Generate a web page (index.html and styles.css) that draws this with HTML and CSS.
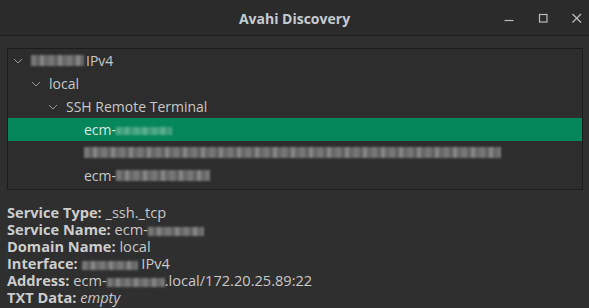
FILE: index.html
```html
<!DOCTYPE html>
<html>
<head>
<meta charset="utf-8">
<link rel="stylesheet" href="styles.css">
</head>
<body>
<div class="window">
  <header class="titlebar">
    <div class="title">Avahi Discovery</div>
    <div class="controls">
      <svg class="ctl" width="12" height="12" viewBox="0 0 12 12"><path d="M1.5 8.5h9" stroke="#bdbdbd" stroke-width="1.2"/></svg>
      <svg class="ctl" width="12" height="12" viewBox="0 0 12 12"><rect x="2.5" y="2.5" width="7.5" height="7.5" fill="none" stroke="#bdbdbd" stroke-width="1.2"/></svg>
      <svg class="ctl" width="12" height="12" viewBox="0 0 12 12"><path d="M1.5 2l8.5 8.5M10 2l-8.5 8.5" stroke="#bdbdbd" stroke-width="1.2"/></svg>
    </div>
  </header>
  <main class="content">
    <div class="tree">
      <div class="row lvl0"><span class="chev"><svg width="10" height="6" viewBox="0 0 10 6"><path d="M1 1l4 4 4-4" fill="none" stroke="#9a9a9a" stroke-width="1"/></svg></span><span class="blur b-if"></span>IPv4</div>
      <div class="row lvl1"><span class="chev"><svg width="10" height="6" viewBox="0 0 10 6"><path d="M1 1l4 4 4-4" fill="none" stroke="#9a9a9a" stroke-width="1"/></svg></span>local</div>
      <div class="row lvl2"><span class="chev"><svg width="10" height="6" viewBox="0 0 10 6"><path d="M1 1l4 4 4-4" fill="none" stroke="#9a9a9a" stroke-width="1"/></svg></span>SSH Remote Terminal</div>
      <div class="row lvl3 selected">ecm-<span class="blur b-sel"></span></div>
      <div class="row lvl3"><span class="blur b-long"></span></div>
      <div class="row lvl3">ecm-<span class="blur b-ecm2"></span></div>
    </div>
    <div class="details">
      <div><b>Service Type:</b> _ssh._tcp</div>
      <div><b>Service Name:</b> ecm-<span class="blur b-name"></span></div>
      <div><b>Domain Name:</b> local</div>
      <div><b>Interface:</b> <span class="blur b-iface"></span> IPv4</div>
      <div><b>Address:</b> ecm-<span class="blur b-addr"></span>.local/172.20.25.89:22</div>
      <div><b>TXT Data:</b> <i>empty</i></div>
    </div>
  </main>
</div>
</body>
</html>
```

FILE: styles.css
```css
html, body {
  margin: 0;
  padding: 0;
  background: #2f2f2f;
}
.window {
  width: 589px;
  height: 308px;
  overflow: hidden;
  font-family: "Open Sans", "Noto Sans", "DejaVu Sans", sans-serif;
  color: #cfcfcf;
  background: #2f2f2f;
}
.titlebar {
  height: 35px;
  background: #2b2b2b;
  border-bottom: 1px solid #1f1f1f;
  display: flex;
  align-items: center;
  justify-content: center;
  position: relative;
}
.title {
  font-weight: bold;
  font-size: 14px;
  color: #c5cbd3;
  margin-top: 1px;
}
.controls {
  position: absolute;
  right: 6px;
  top: 12px;
  display: flex;
  gap: 22px;
}
.content {
  padding: 12px 6px 0 7px;
}
.tree {
  border: 1px solid #1c1c1c;
  background: #2d2d2d;
  height: 140px;
  font-size: 14px;
}
.row {
  height: 23px;
  display: flex;
  align-items: center;
  white-space: nowrap;
  color: #c8c8c8;
}
.chev {
  width: 23px;
  display: inline-flex;
  align-items: center;
  padding-left: 5px;
  box-sizing: border-box;
}
.lvl0 { padding-left: 0; }
.lvl1 { padding-left: 18px; }
.lvl2 { padding-left: 35px; }
.lvl3 { padding-left: 76px; }
.selected {
  background: #06875b;
  color: #d9e8e0;
}
.blur {
  display: inline-block;
  height: 11px;
  background: repeating-linear-gradient(90deg, #8a8a8a 0 5px, #6e6e6e 5px 9px, #9c9c9c 9px 13px, #777 13px 18px);
  opacity: 0.8;
  filter: blur(1px);
}
.selected .blur {
  background: repeating-linear-gradient(90deg, #5fb496 0 5px, #4ea585 5px 9px, #6cbb9e 9px 13px, #4c9f80 13px 18px);
  height: 8px;
  margin-top: 2px;
}
.b-if { width: 53px; margin-right: 2px; }
.b-sel { width: 56px; }
.b-long { width: 417px; }
.b-ecm2 { width: 94px; }
.details {
  padding-top: 14px;
  font-size: 14.6px;
  line-height: 17px;
  color: #c8c8c8;
}
.details b { color: #cdcdcd; }
.details .blur { height: 9px; vertical-align: -1px; }
.b-name { width: 56px; }
.b-iface { width: 56px; }
.b-addr { width: 58px; }
```
